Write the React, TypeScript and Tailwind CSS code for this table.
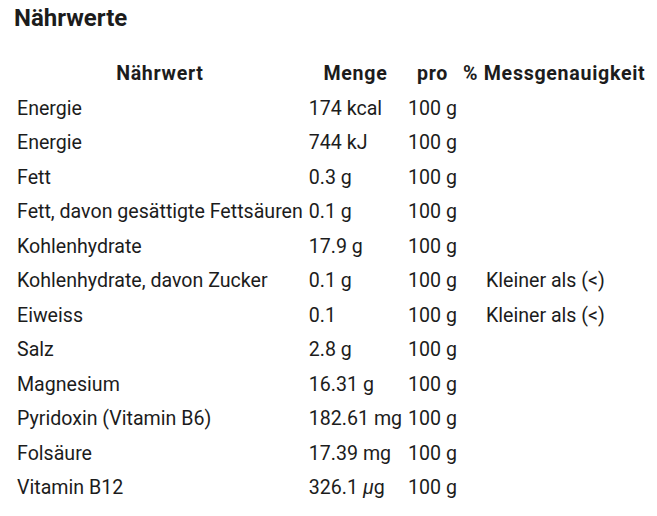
const rows: [string, string, string, string][] = [
  ["Energie", "174 kcal", "100 g", ""],
  ["Energie", "744 kJ", "100 g", ""],
  ["Fett", "0.3 g", "100 g", ""],
  ["Fett, davon gesättigte Fettsäuren", "0.1 g", "100 g", ""],
  ["Kohlenhydrate", "17.9 g", "100 g", ""],
  ["Kohlenhydrate, davon Zucker", "0.1 g", "100 g", "Kleiner als (<)"],
  ["Eiweiss", "0.1", "100 g", "Kleiner als (<)"],
  ["Salz", "2.8 g", "100 g", ""],
  ["Magnesium", "16.31 g", "100 g", ""],
  ["Pyridoxin (Vitamin B6)", "182.61 mg", "100 g", ""],
  ["Folsäure", "17.39 mg", "100 g", ""],
  ["Vitamin B12", "326.1 µg", "100 g", ""],
];

export default function App() {
  return (
    <div className="bg-white min-h-screen px-[14px] pt-[3px] text-[#1c1c1c] font-['Roboto',sans-serif]">
      <h2 className="text-[24px] font-bold leading-[30px]">Nährwerte</h2>

      <table className="mt-[24px] border-collapse text-[19.6px] whitespace-nowrap">
        <thead>
          <tr className="h-[34px] tracking-[0.7px]">
            <th className="px-[3px] font-bold text-center">Nährwert</th>
            <th className="px-[3px] font-bold text-center">Menge</th>
            <th className="px-[3px] font-bold text-center">pro</th>
            <th className="px-[3px] font-bold text-center">% Messgenauigkeit</th>
          </tr>
        </thead>
        <tbody>
          {rows.map((r, i) => (
            <tr key={i} className="h-[34.5px]">
              <td className="px-[3px]">{r[0]}</td>
              <td className="px-[3px]">
                {r[1].endsWith("µg") ? (
                  <>
                    {r[1].replace("µg", "")}
                    <span className="italic">µ</span>g
                  </>
                ) : (
                  r[1]
                )}
              </td>
              <td className="px-[3px]">{r[2]}</td>
              <td className="pl-[26px] pr-[3px]">{r[3]}</td>
            </tr>
          ))}
        </tbody>
      </table>
    </div>
  );
}
